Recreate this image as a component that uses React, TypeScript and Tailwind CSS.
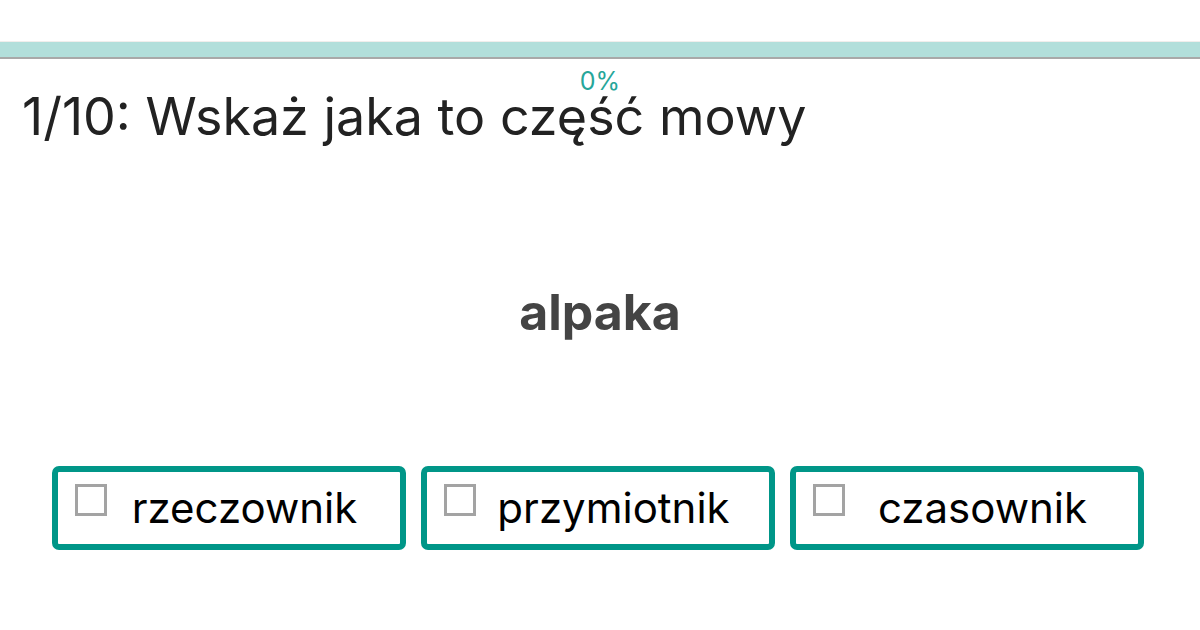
const options = ['rzeczownik', 'przymiotnik', 'czasownik'];

export default function App() {
  return (
    <div className="w-[1200px] h-[630px] bg-white overflow-hidden" style={{ fontFamily: 'Inter, Roboto, "Noto Sans", sans-serif' }}>
      <div className="h-[42px] border-b border-[#f0eeec]" />
      <div className="h-[15px] bg-[#b2dfdb] border-b-2 border-[#a9a9a9] box-content" />
      <div className="text-center text-[#26a69a] text-[25px] leading-[30px] mt-[7px]">0%</div>
      <h1 className="pl-[22px] text-[52px] leading-[60px] text-[#222222] -mt-[9px]">1/10: Wskaż jaka to część mowy</h1>
      <div className="text-center text-[50px] font-bold text-[#444444] mt-[135px] leading-[60px]">alpaka</div>
      <div className="flex gap-[15px] pl-[52px] pr-[56px] mt-[124px]">
        {options.map((o) => (
          <button
            key={o}
            className="flex-1 h-[84px] border-[6px] border-[#009688] rounded-[7px] flex items-start pl-[17px] pr-[18px] pt-[12px] bg-white"
          >
            <span className="w-[32px] h-[32px] border-[3px] border-[#a3a3a3] shrink-0" />
            <span className="flex-1 text-center text-[42px] leading-[48px] text-black">{o}</span>
          </button>
        ))}
      </div>
    </div>
  );
}
